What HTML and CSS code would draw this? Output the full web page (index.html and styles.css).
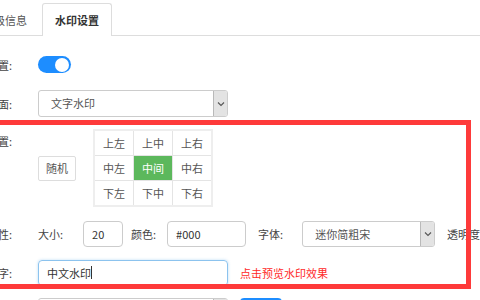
FILE: index.html
```html
<!DOCTYPE html>
<html lang="zh-CN">
<head>
    <meta charset="UTF-8">
    <meta name="viewport" content="width=device-width, initial-scale=1.0">
    <title>水印设置</title>
    <link rel="stylesheet" href="styles.css">
</head>
<body>
    <div class="tabs">
        <div class="tab">高级信息</div>
        <div class="tab active">水印设置</div>
    </div>

    <div class="form">
        <div class="row row-switch">
            <div class="label">水印设置:</div>
            <div class="switch"><span class="knob"></span></div>
        </div>

        <div class="row">
            <div class="label">水印画面:</div>
            <div class="select wide">
                <span class="select-text">文字水印</span>
                <span class="select-arrow"><svg width="8" height="6" viewBox="0 0 8 6"><path d="M1 1.5 L4 4.5 L7 1.5" fill="none" stroke="#555" stroke-width="1.1"/></svg></span>
            </div>
        </div>

        <div class="row row-pos">
            <div class="label label-top">水印位置:</div>
            <button class="random-btn">随机</button>
            <table class="pos-grid">
                <tr><td>上左</td><td>上中</td><td>上右</td></tr>
                <tr><td>中左</td><td class="on">中间</td><td>中右</td></tr>
                <tr><td>下左</td><td>下中</td><td>下右</td></tr>
            </table>
        </div>

        <div class="row row-font">
            <div class="label">文字属性:</div>
            <span class="sub-label">大小:</span>
            <input class="input size-input" type="text" value="20">
            <span class="sub-label color-label">颜色:</span>
            <input class="input color-input" type="text" value="#000">
            <span class="sub-label font-label">字体:</span>
            <div class="select font-select">
                <span class="select-text">迷你简粗宋</span>
                <span class="select-arrow"><svg width="8" height="6" viewBox="0 0 8 6"><path d="M1 1.5 L4 4.5 L7 1.5" fill="none" stroke="#555" stroke-width="1.1"/></svg></span>
            </div>
            <span class="sub-label alpha-label">透明度</span>
        </div>

        <div class="row">
            <div class="label">水印文字:</div>
            <div class="input wide focused">中文水印<span class="caret"></span></div>
            <span class="preview-tip">点击预览水印效果</span>
        </div>

        <div class="row">
            <div class="label">水印字体:</div>
            <div class="select wide">
                <span class="select-text"></span>
                <span class="select-arrow"></span>
            </div>
            <button class="blue-btn">预览</button>
        </div>
    </div>

    <div class="mark"></div>
</body>
</html>
```

FILE: styles.css
```css
body {
    margin: 0;
    background-color: #fff;
    color: #333;
    font-family: "Noto Sans CJK SC", "Noto Sans", sans-serif;
    font-size: 11px;
    width: 480px;
    height: 300px;
    overflow: hidden;
    position: relative;
}
.tabs {
    display: flex;
    padding-top: 3px;
    border-bottom: 1px solid #ddd;
    margin-left: -30px;
    width: 560px;
}
.tab {
    height: 32px;
    line-height: 32px;
    padding: 0 12px;
    margin-right: 2px;
    margin-bottom: -1px;
    border: 1px solid transparent;
    border-bottom: none;
    color: #555;
    font-size: 11px;
}
.tab.active {
    border-color: #ddd;
    border-radius: 3px 3px 0 0;
    background-color: #fff;
    color: #333;
    font-weight: bold;
}
.form {
    margin-left: -68px;
    padding-top: 15px;
}
.row {
    display: flex;
    align-items: center;
    min-height: 27px;
    margin-bottom: 12px;
}
.row-font {
    margin-top: 1px;
}
.label {
    width: 80px;
    flex-shrink: 0;
    margin-right: 26px;
    text-align: right;
    color: #444;
}
.row-pos {
    align-items: center;
    margin-bottom: 13px;
}
.label-top {
    align-self: flex-start;
    margin-top: 4px;
}
.switch {
    width: 33px;
    height: 17px;
    border-radius: 9px;
    background-color: #1d8dff;
    position: relative;
}
.knob {
    position: absolute;
    right: 2px;
    top: 1.5px;
    width: 14px;
    height: 14px;
    border-radius: 50%;
    background-color: #fff;
}
.select {
    display: flex;
    align-items: stretch;
    height: 27px;
    box-sizing: border-box;
    border: 1px solid #ccc;
    border-radius: 3px;
    background-color: #fff;
}
.select-text {
    flex: 1;
    padding-left: 12px;
    line-height: 25px;
    color: #555;
}
.select-arrow {
    width: 13px;
    display: flex;
    align-items: center;
    justify-content: center;
    background-color: #e3e3e3;
    border-left: 1px solid #b9b9b9;
    border-radius: 0 2px 2px 0;
}
.wide {
    width: 190px;
}
.random-btn {
    width: 38px;
    height: 25px;
    padding: 0;
    margin-right: 17px;
    border: 1px solid #ddd;
    border-radius: 2px;
    background-color: #fff;
    color: #555;
    font-family: inherit;
    font-size: 11px;
}
.pos-grid {
    border-collapse: collapse;
    border: 2px solid #eee;
}
.pos-grid td {
    width: 38px;
    height: 24px;
    padding: 0;
    border: 1px solid #e4e4e4;
    text-align: center;
    color: #555;
}
.pos-grid td.on {
    background-color: #5cb85c;
    color: #fff;
}
.input {
    height: 26px;
    box-sizing: border-box;
    border: 1px solid #ccc;
    border-radius: 4px;
    padding: 0 8px;
    font-family: inherit;
    font-size: 11px;
    color: #333;
    line-height: 24px;
}
.sub-label {
    color: #444;
}
.size-input {
    width: 40px;
    margin-left: 20px;
}
.color-label {
    margin-left: 8px;
}
.color-input {
    width: 79px;
    margin-left: 11px;
}
.font-label {
    margin-left: 12px;
}
.font-select {
    width: 133px;
    height: 26px;
    margin-left: 19px;
}
.font-select .select-text {
    line-height: 24px;
}
.alpha-label {
    margin-left: 12px;
    white-space: nowrap;
}
.focused {
    border-color: #8cc3ee;
    box-shadow: 0 0 3px rgba(102, 175, 233, 0.45);
    display: flex;
    align-items: center;
}
.caret {
    display: inline-block;
    width: 1px;
    height: 13px;
    background-color: #333;
}
.preview-tip {
    margin-left: 12px;
    color: #ff2a2a;
}
.blue-btn {
    margin-left: 12px;
    width: 42px;
    height: 27px;
    border: none;
    border-radius: 4px;
    background-color: #1d8dff;
    color: #fff;
    font-family: inherit;
    font-size: 11px;
}
.mark {
    position: absolute;
    left: -10px;
    top: 120px;
    width: 481px;
    height: 169px;
    box-sizing: border-box;
    border: 5px solid #fe3a3a;
    pointer-events: none;
}
```
